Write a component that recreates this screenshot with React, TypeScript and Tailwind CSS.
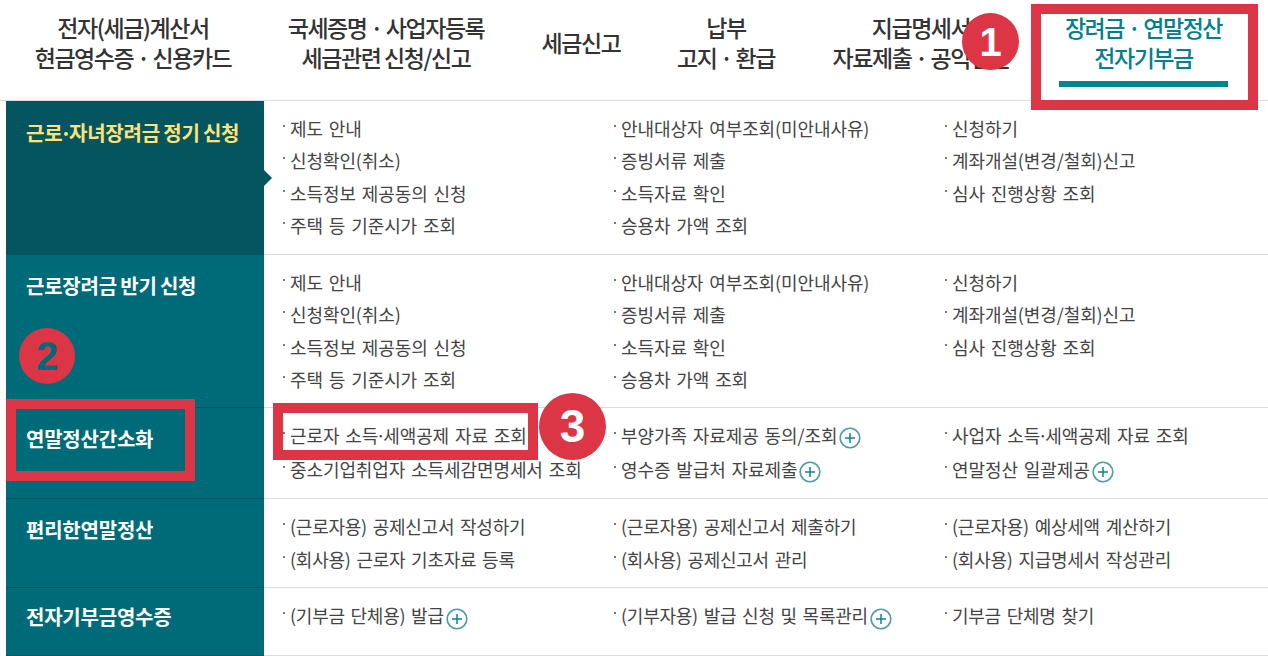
const navItems = [
  { lines: ['전자(세금)계산서', '현금영수증 · 신용카드'], width: 'w-[266px]' },
  { lines: ['국세증명 · 사업자등록', '세금관련 신청/신고'], width: 'w-[240px]' },
  { lines: ['세금신고'], width: 'w-[150px]' },
  { lines: ['납부', '고지 · 환급'], width: 'w-[140px]' },
  { lines: ['지급명세서', '자료제출 · 공익법인'], width: 'w-[250px]' },
];

type Link = { label: string; plus?: boolean };

const refundLinks: Link[][] = [
  [{ label: '제도 안내' }, { label: '신청확인(취소)' }, { label: '소득정보 제공동의 신청' }, { label: '주택 등 기준시가 조회' }],
  [{ label: '안내대상자 여부조회(미안내사유)' }, { label: '증빙서류 제출' }, { label: '소득자료 확인' }, { label: '승용차 가액 조회' }],
  [{ label: '신청하기' }, { label: '계좌개설(변경/철회)신고' }, { label: '심사 진행상황 조회' }],
];

const rows = [
  { title: '근로·자녀장려금 정기 신청', height: 'h-[154px]', titleTop: 'pt-[18px]', active: true, lineHeight: 'h-[32.5px]', pad: 'pt-[11px]', track: 'tracking-[-0.1px]', cols: refundLinks },
  { title: '근로장려금 반기 신청', height: 'h-[153px]', titleTop: 'pt-[17px]', active: false, lineHeight: 'h-[32.5px]', pad: 'pt-[11px]', track: 'tracking-[-0.1px]', cols: refundLinks },
  {
    title: '연말정산간소화', height: 'h-[91px]', titleTop: 'pt-[17px]', active: false, lineHeight: 'h-[34px]', pad: 'pt-[10px]', track: 'tracking-[-0.1px]',
    cols: [
      [{ label: '근로자 소득·세액공제 자료 조회' }, { label: '중소기업취업자 소득세감면명세서 조회' }],
      [{ label: '부양가족 자료제공 동의/조회', plus: true }, { label: '영수증 발급처 자료제출', plus: true }],
      [{ label: '사업자 소득·세액공제 자료 조회' }, { label: '연말정산 일괄제공', plus: true }],
    ],
  },
  {
    title: '편리한연말정산', height: 'h-[89px]', titleTop: 'pt-[17px]', active: false, lineHeight: 'h-[33px]', pad: 'pt-[11px]', track: 'tracking-[-0.25px]',
    cols: [
      [{ label: '(근로자용) 공제신고서 작성하기' }, { label: '(회사용) 근로자 기초자료 등록' }],
      [{ label: '(근로자용) 공제신고서 제출하기' }, { label: '(회사용) 공제신고서 관리' }],
      [{ label: '(근로자용) 예상세액 계산하기' }, { label: '(회사용) 지급명세서 작성관리' }],
    ],
  },
  {
    title: '전자기부금영수증', height: 'h-[68px]', titleTop: 'pt-[15px]', active: false, lineHeight: 'h-[33px]', pad: 'pt-[11px]', track: 'tracking-[-0.25px]',
    cols: [
      [{ label: '(기부금 단체용) 발급', plus: true }],
      [{ label: '(기부자용) 발급 신청 및 목록관리', plus: true }],
      [{ label: '기부금 단체명 찾기' }],
    ],
  },
];

// the source squeezes the middle dot between words
function DotText({ text }: { text: string }) {
  const parts = text.split('·');
  return (
    <span>
      {parts.map((part, i) => (
        <span key={i}>
          {i > 0 && <span className="mx-[-2.5px]">·</span>}
          {part}
        </span>
      ))}
    </span>
  );
}

function PlusIcon() {
  return (
    <svg width="22" height="22" viewBox="0 0 22 22" className="ml-[2px] mt-[6px] shrink-0">
      <circle cx="11" cy="11" r="9.8" fill="white" stroke="#4f9ca4" strokeWidth="1.6" />
      <path d="M11 6v10M6 11h10" stroke="#0b8791" strokeWidth="1.5" />
    </svg>
  );
}

function Row({ row }: { row: (typeof rows)[number] }) {
  return (
    <div className={`flex ${row.height}`}>
      <div className={`relative w-[258px] shrink-0 border-b border-[#055560] pl-5 ${row.titleTop} ${row.active ? 'bg-[#055560]' : 'bg-[#006b78]'}`}>
        <span className={`text-[20px] leading-[28px] font-bold tracking-[-0.22px] [word-spacing:-1px] whitespace-nowrap ${row.active ? 'text-[#fde47a]' : 'text-white'}`}>
          <DotText text={row.title} />
        </span>
        {row.active && (
          <span className="absolute left-[258px] top-[69px] h-0 w-0 border-y-[8px] border-l-[8px] border-y-transparent border-l-[#055560]" />
        )}
      </div>
      <div className={`grid flex-1 grid-cols-[331px_331px_1fr] content-start border-b border-[#dcdcdc] pl-[19px] ${row.pad}`}>
        {row.cols.map((col, i) => (
          <div key={i}>
            {col.map((link) => (
              <div key={link.label} className={`flex items-center whitespace-nowrap text-[18px] [word-spacing:2px] text-[#444444] ${row.track} ${row.lineHeight}`}>
                <span className="mr-[5px] mb-[5px] h-[2px] w-[2px] shrink-0 bg-[#777777]" />
                <DotText text={link.label} />
                {link.plus && <PlusIcon />}
              </div>
            ))}
          </div>
        ))}
      </div>
    </div>
  );
}

export default function App() {
  return (
    <div className="relative h-[656px] w-[1268px] overflow-hidden bg-white font-['Noto_Sans_CJK_KR','Noto_Sans',sans-serif]">
      {/* Top nav */}
      <nav className="flex h-[101px] border-b border-[#dcdcdc] pt-[12px]">
        {navItems.map((item) => (
          <div
            key={item.lines[0]}
            className={`${item.width} flex h-[60px] shrink-0 flex-col items-center justify-center text-[23px] leading-[30.5px] font-medium tracking-[-1.45px] whitespace-nowrap text-[#333333]`}
          >
            {item.lines.map((l) => (
              <span key={l}>{l}</span>
            ))}
          </div>
        ))}
        <div className="flex w-[195px] flex-col items-center">
          <div className="flex h-[60px] flex-col items-center justify-center text-[23px] leading-[30.5px] font-medium tracking-[-1.45px] whitespace-nowrap text-[#00808c]">
            <span>장려금 · 연말정산</span>
            <span>전자기부금</span>
          </div>
          <div className="mt-[9px] h-[6px] w-[169px] bg-[#00868f]" />
        </div>
      </nav>

      {/* Menu table */}
      <div className="pl-[6px]">
        {rows.map((row) => (
          <Row key={row.title} row={row} />
        ))}
      </div>

      {/* Annotations */}
      <div className="absolute left-[1031px] top-[4px] h-[106px] w-[227px] border-[10px] border-[#dc3545]" />
      <div className="absolute left-[6px] top-[399px] h-[82px] w-[189px] border-[10px] border-[#dc3545]" />
      <div className="absolute left-[273px] top-[403px] h-[57px] w-[265px] border-[10px] border-[#dc3545]" />

      <div className="absolute left-[962px] top-[13px] flex h-[57px] w-[57px] items-center justify-center rounded-full bg-[#dc3545] font-['Liberation_Sans',sans-serif] text-[40px] font-bold text-white">1</div>
      <div className="absolute left-[19px] top-[328px] flex h-[56px] w-[56px] items-center justify-center rounded-full bg-[#dc3545] font-['Liberation_Sans',sans-serif] text-[40px] font-bold text-[#006b78]">2</div>
      <div className="absolute left-[539px] top-[393px] flex h-[67px] w-[67px] items-center justify-center rounded-full bg-[#dc3545] font-['Liberation_Sans',sans-serif] text-[46px] font-bold text-white">3</div>
    </div>
  );
}
